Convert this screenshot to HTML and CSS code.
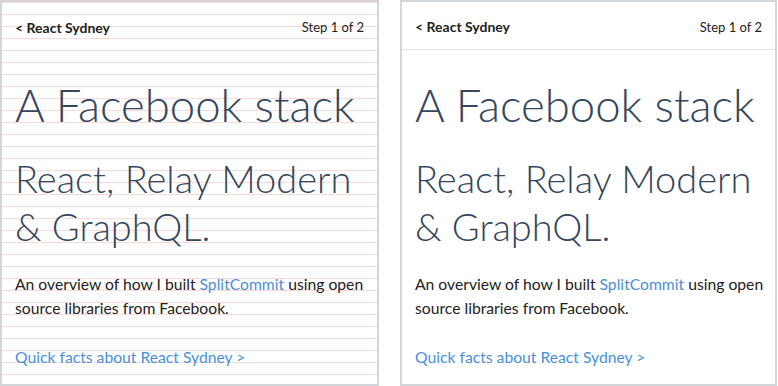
FILE: index.html
```html
<!DOCTYPE html>
<html lang="en">
<head>
    <meta charset="UTF-8">
    <meta name="viewport" content="width=device-width, initial-scale=1.0">
    <title>A Facebook stack</title>
    <link rel="stylesheet" href="styles.css">
</head>
<body>

    <div class="screens">
        <!-- With baseline grid -->
        <div class="screen grid">
            <div class="screen-header">
                <a class="back">&lt; React Sydney</a>
                <span class="step">Step 1 of 2</span>
            </div>
            <div class="screen-body">
                <h1>A Facebook stack</h1>
                <h2>React, Relay Modern &amp; GraphQL.</h2>
                <p>An overview of how I built <a href="#">SplitCommit</a> using open source libraries from Facebook.</p>
                <a class="next" href="#">Quick facts about React Sydney &gt;</a>
            </div>
        </div>

        <!-- Final -->
        <div class="screen final">
            <div class="screen-header">
                <a class="back">&lt; React Sydney</a>
                <span class="step">Step 1 of 2</span>
            </div>
            <div class="screen-body">
                <h1>A Facebook stack</h1>
                <h2>React, Relay Modern &amp; GraphQL.</h2>
                <p>An overview of how I built <a href="#">SplitCommit</a> using open source libraries from Facebook.</p>
                <a class="next" href="#">Quick facts about React Sydney &gt;</a>
            </div>
        </div>
    </div>

</body>
</html>
```

FILE: styles.css
```css
body {
    margin: 0;
    font-family: Lato, "Open Sans", sans-serif;
    color: #222;
    background: #fff;
}

.screens {
    display: flex;
    gap: 21px;
}

.screen {
    box-sizing: border-box;
    width: 379px;
    height: 386px;
    border: 2px solid #d3d6db;
    overflow: hidden;
}

.screen.final {
    width: 377px;
}

.screen.grid {
    background-image: repeating-linear-gradient(to bottom, #fbd9d6 0, #fbd9d6 1px, transparent 1px, transparent 12px);
}

.screen-header {
    box-sizing: border-box;
    display: flex;
    justify-content: space-between;
    align-items: center;
    height: 48px;
    padding: 2px 13px 0;
    font-size: 13px;
}

.screen.final .screen-header {
    border-bottom: 1px solid #e1e3e6;
}

.back {
    font-size: 14px;
    font-weight: 700;
    color: #222;
}

.step {
    color: #222;
}

.screen-body {
    padding: 0 8px 0 13px;
}

h1 {
    margin: 25px 0 0;
    font-size: 45.5px;
    font-weight: 300;
    line-height: 60px;
    color: #34475c;
}

h2 {
    margin: 19px 0 0;
    font-size: 38px;
    font-weight: 300;
    line-height: 48px;
    color: #34475c;
}

p {
    margin: 22px 0 0;
    font-size: 15.7px;
    line-height: 24px;
}

a {
    color: #4a90d9;
    text-decoration: none;
}

.next {
    display: block;
    margin-top: 25px;
    font-size: 15.7px;
    line-height: 24px;
}
```
